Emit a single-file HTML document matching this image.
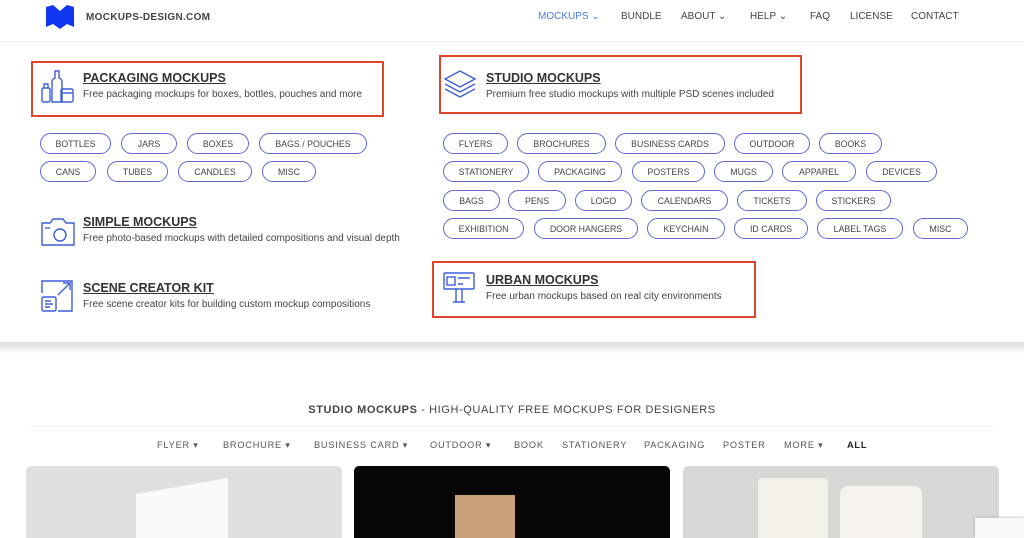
<!DOCTYPE html>
<html><head><meta charset="utf-8"><style>
*{margin:0;padding:0;box-sizing:border-box}
html,body{width:1024px;height:538px;overflow:hidden}
body{background:#fff;font-family:"Liberation Sans",Arial,sans-serif;position:relative;color:#333}
.a{position:absolute}
.nav{font-size:10px;color:#444;top:11px}
.pill{position:absolute;height:21px;border:1.3px solid #5f65d4;border-radius:11px;font-size:8.8px;color:#444;display:flex;align-items:center;justify-content:center}
.rb{position:absolute;border:2px solid #e0452c}
.t{position:absolute;font-size:12.5px;font-weight:bold;text-decoration:underline;color:#333;letter-spacing:0}
.d{position:absolute;font-size:10px;color:#444}
.f{position:absolute;top:440px;font-size:9.2px;color:#555;letter-spacing:.8px}
svg{position:absolute}
</style></head><body>
<svg style="left:46px;top:5px" width="28" height="24" viewBox="0 0 28 24"><path d="M0 2 L7 0 L14 6 L21 0 L28 2 L28 22 L21 19 L14 24 L7 19 L0 22Z" fill="#1237f0"/></svg>
<div class="a" style="left:86px;top:12px;font-size:10px;font-weight:bold;color:#444;letter-spacing:.3px">MOCKUPS-DESIGN.COM</div>
<div class="a nav" style="left:538px;color:#4a7be0">MOCKUPS ⌄</div>
<div class="a nav" style="left:621px">BUNDLE</div>
<div class="a nav" style="left:681px">ABOUT ⌄</div>
<div class="a nav" style="left:750px">HELP ⌄</div>
<div class="a nav" style="left:810px">FAQ</div>
<div class="a nav" style="left:850px">LICENSE</div>
<div class="a nav" style="left:911px">CONTACT</div>
<div class="a" style="left:0;top:41px;width:1024px;height:1px;background:#eee"></div>
<div class="a" style="left:0;top:342px;width:1024px;height:12px;background:linear-gradient(#dcdcdc,#fff)"></div>

<div class="rb" style="left:31px;top:61px;width:353px;height:56px"></div>
<svg style="left:40px;top:68px" width="34" height="36" viewBox="0 0 34 36" fill="none" stroke="#3b5ed8" stroke-width="1.4"><rect x="2" y="20" width="8" height="14" rx="1.5"/><path d="M4 20v-4h4v4"/><path d="M12 34V14q0-3 3-4V3h4v7q3 1 3 4v20z"/><rect x="21" y="21" width="12" height="13" rx="1.5"/><path d="M21 25h12"/></svg>
<div class="t" style="left:83px;top:71px">PACKAGING MOCKUPS</div>
<div class="d" style="left:83px;top:89px">Free packaging mockups for boxes, bottles, pouches and more</div>

<div class="rb" style="left:439px;top:55px;width:363px;height:59px"></div>
<svg style="left:444px;top:69px" width="33" height="33" viewBox="0 0 33 33" fill="none" stroke="#3b5ed8" stroke-width="1.4"><path d="M16 2L31 10 16 18 1 10z"/><path d="M1 15l15 8 15-8"/><path d="M1 20l15 8 15-8"/></svg>
<div class="t" style="left:486px;top:71px">STUDIO MOCKUPS</div>
<div class="d" style="left:486px;top:89px">Premium free studio mockups with multiple PSD scenes included</div>

<svg style="left:40px;top:217px" width="36" height="30" viewBox="0 0 36 30" fill="none" stroke="#3b5ed8" stroke-width="1.4"><path d="M2 6h8l3-4h10l3 4h8v22H2z"/><circle cx="20" cy="18" r="6"/><path d="M5 11h5"/></svg>
<div class="t" style="left:83px;top:215px">SIMPLE MOCKUPS</div>
<div class="d" style="left:83px;top:233px">Free photo-based mockups with detailed compositions and visual depth</div>

<svg style="left:40px;top:279px" width="34" height="33" viewBox="0 0 34 33" fill="none" stroke="#3b5ed8" stroke-width="1.4"><path d="M2 14V2h30v30H18"/><rect x="2" y="18" width="14" height="14" rx="1.5"/><path d="M5 22h6M5 25h8M5 28h5"/><path d="M18 16L30 4M23 4h7v7"/></svg>
<div class="t" style="left:83px;top:281px">SCENE CREATOR KIT</div>
<div class="d" style="left:83px;top:299px">Free scene creator kits for building custom mockup compositions</div>

<div class="rb" style="left:432px;top:261px;width:324px;height:57px"></div>
<svg style="left:443px;top:272px" width="32" height="32" viewBox="0 0 32 32" fill="none" stroke="#3b5ed8" stroke-width="1.4"><rect x="1" y="1" width="30" height="16" rx="1"/><rect x="4" y="5" width="8" height="8"/><path d="M15 6h12M15 12h5M13 17v13M19 17v13M10 30h12"/></svg>
<div class="t" style="left:486px;top:273px">URBAN MOCKUPS</div>
<div class="d" style="left:486px;top:291px">Free urban mockups based on real city environments</div>

<div class="pill" style="left:40px;top:133px;width:71px">BOTTLES</div>
<div class="pill" style="left:121px;top:133px;width:56px">JARS</div>
<div class="pill" style="left:187px;top:133px;width:62px">BOXES</div>
<div class="pill" style="left:259px;top:133px;width:108px">BAGS / POUCHES</div>
<div class="pill" style="left:40px;top:161px;width:56px">CANS</div>
<div class="pill" style="left:107px;top:161px;width:61px">TUBES</div>
<div class="pill" style="left:178px;top:161px;width:74px">CANDLES</div>
<div class="pill" style="left:262px;top:161px;width:54px">MISC</div>
<div class="pill" style="left:443px;top:133px;width:65px">FLYERS</div>
<div class="pill" style="left:517px;top:133px;width:89px">BROCHURES</div>
<div class="pill" style="left:615px;top:133px;width:110px">BUSINESS CARDS</div>
<div class="pill" style="left:734px;top:133px;width:76px">OUTDOOR</div>
<div class="pill" style="left:819px;top:133px;width:63px">BOOKS</div>
<div class="pill" style="left:443px;top:161px;width:86px">STATIONERY</div>
<div class="pill" style="left:538px;top:161px;width:84px">PACKAGING</div>
<div class="pill" style="left:632px;top:161px;width:73px">POSTERS</div>
<div class="pill" style="left:714px;top:161px;width:59px">MUGS</div>
<div class="pill" style="left:782px;top:161px;width:74px">APPAREL</div>
<div class="pill" style="left:866px;top:161px;width:71px">DEVICES</div>
<div class="pill" style="left:443px;top:190px;width:57px">BAGS</div>
<div class="pill" style="left:508px;top:190px;width:58px">PENS</div>
<div class="pill" style="left:575px;top:190px;width:57px">LOGO</div>
<div class="pill" style="left:641px;top:190px;width:87px">CALENDARS</div>
<div class="pill" style="left:737px;top:190px;width:70px">TICKETS</div>
<div class="pill" style="left:816px;top:190px;width:75px">STICKERS</div>
<div class="pill" style="left:443px;top:218px;width:81px">EXHIBITION</div>
<div class="pill" style="left:534px;top:218px;width:104px">DOOR HANGERS</div>
<div class="pill" style="left:647px;top:218px;width:78px">KEYCHAIN</div>
<div class="pill" style="left:734px;top:218px;width:74px">ID CARDS</div>
<div class="pill" style="left:817px;top:218px;width:86px">LABEL TAGS</div>
<div class="pill" style="left:913px;top:218px;width:55px">MISC</div>

<div class="a" style="left:0;top:404px;width:1024px;text-align:center;font-size:11px;color:#444;letter-spacing:.6px"><b>STUDIO MOCKUPS</b> - HIGH-QUALITY FREE MOCKUPS FOR DESIGNERS</div>
<div class="a" style="left:27px;top:426px;width:970px;height:1px;background:#f2f2f2"></div>
<div class="f" style="left:157px">FLYER ▾</div>
<div class="f" style="left:223px">BROCHURE ▾</div>
<div class="f" style="left:314px">BUSINESS CARD ▾</div>
<div class="f" style="left:430px">OUTDOOR ▾</div>
<div class="f" style="left:514px">BOOK</div>
<div class="f" style="left:562px">STATIONERY</div>
<div class="f" style="left:644px">PACKAGING</div>
<div class="f" style="left:723px">POSTER</div>
<div class="f" style="left:784px">MORE ▾</div>
<div class="f" style="left:847px;color:#222;font-weight:bold">ALL</div>
<div class="a" style="left:26px;top:466px;width:316px;height:80px;background:#e0dfdf;border-radius:5px"></div>
<div class="a" style="left:136px;top:486px;width:92px;height:60px;background:#fafafa;transform:skewY(-10deg)"></div>
<div class="a" style="left:354px;top:466px;width:316px;height:80px;background:#070605;border-radius:5px"></div>
<div class="a" style="left:455px;top:495px;width:60px;height:50px;background:#c9a27a"></div>
<div class="a" style="left:683px;top:466px;width:316px;height:80px;background:#d9d7d5;border-radius:5px"></div>
<div class="a" style="left:758px;top:478px;width:70px;height:70px;background:#f3f0ea;border-radius:4px"></div>
<div class="a" style="left:840px;top:486px;width:82px;height:60px;background:#f6f3ee;border-radius:8px"></div>
<div class="a" style="left:975px;top:518px;width:49px;height:20px;background:#f9f9f9;box-shadow:0 0 3px #aaa"></div>
</body></html>
